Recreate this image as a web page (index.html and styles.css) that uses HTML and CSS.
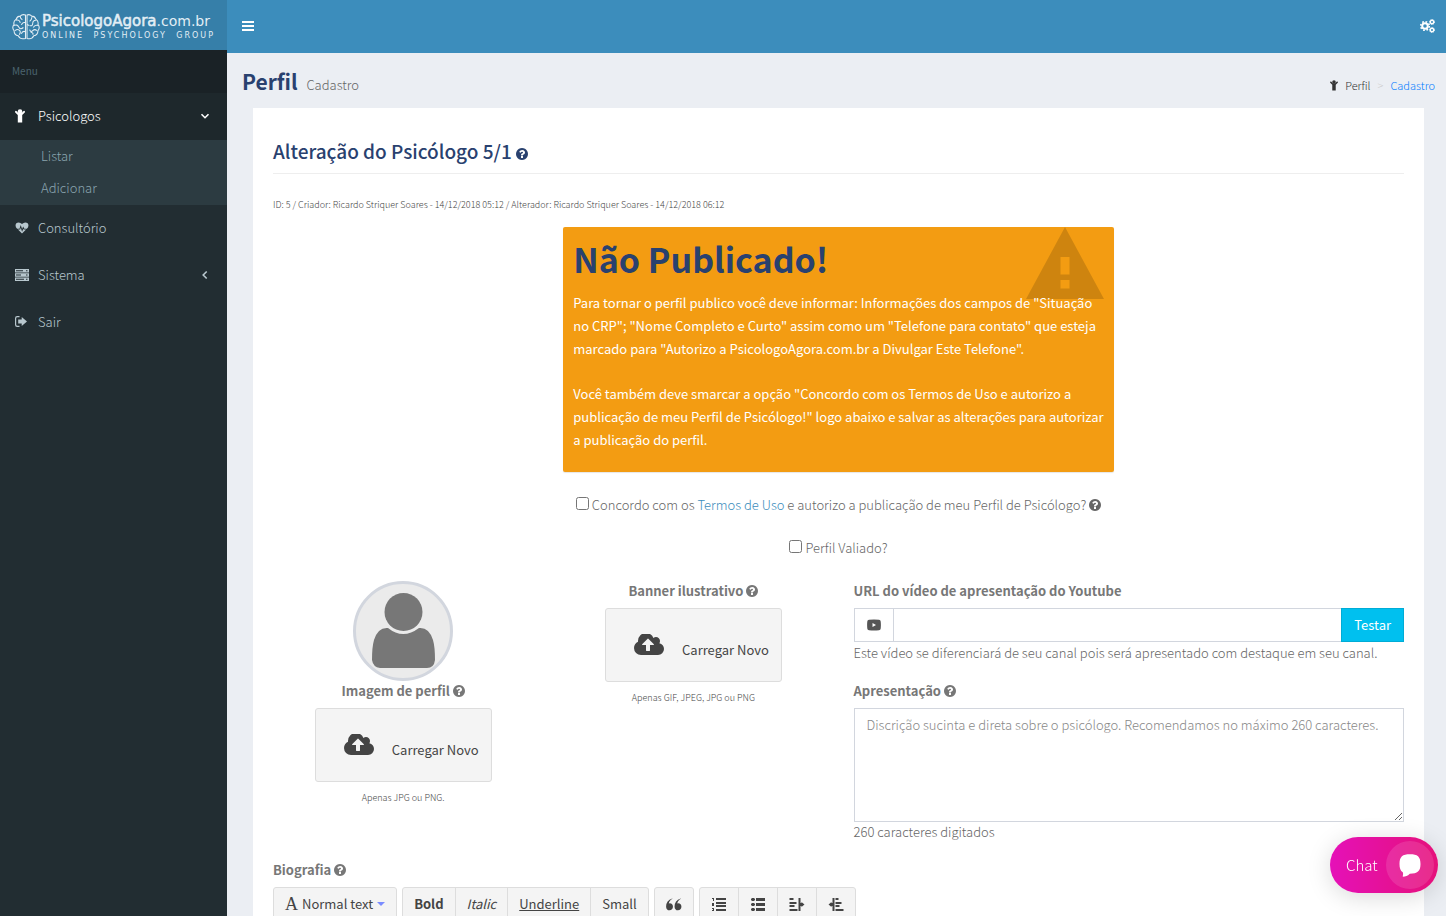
FILE: index.html
```html
<!DOCTYPE html>
<html lang="pt-br">
<head>
    <meta charset="utf-8">
    <meta name="viewport" content="width=device-width, initial-scale=1">
    <title>Perfil - Cadastro</title>
    <link rel="stylesheet" href="styles.css">
</head>
<body>
<svg class="sprite" aria-hidden="true">
    <symbol id="i-help" viewBox="128 128 1536 1536"><path d="M1024 1376v-192q0-14-9-23t-23-9h-192q-14 0-23 9t-9 23v192q0 14 9 23t23 9h192q14 0 23-9t9-23zm256-672q0-88-55.5-163t-138.5-116-170-41q-243 0-371 213-15 24 8 42l132 100q7 6 19 6 16 0 25-12 53-68 86-92 34-24 86-24 48 0 85.5 26t37.5 59q0 38-20 61t-68 45q-63 28-115.5 86.5t-52.5 125.5v36q0 14 9 23t23 9h192q14 0 23-9t9-23q0-19 21.5-49.5t54.5-49.5q32-18 49-28.5t46-35 44.5-48 28-60.5 12.5-81zm384 192q0 209-103 385.5t-279.5 279.5-385.5 103-385.5-103-279.5-279.5-103-385.5 103-385.5 279.5-279.5 385.5-103 385.5 103 279.5 279.5 103 385.5z"/></symbol>
    <symbol id="i-cloud" viewBox="0 256 1920 1280"><path d="M1280 864q0-14-9-23l-352-352q-9-9-23-9t-23 9l-351 351q-10 12-10 24 0 14 9 23t23 9h224v352q0 13 9.5 22.5t22.5 9.5h192q13 0 22.5-9.5t9.5-22.5v-352h224q13 0 22.5-9.5t9.5-22.5zm640 288q0 159-112.5 271.5t-271.5 112.5h-1088q-185 0-316.5-131.5t-131.5-316.5q0-130 70-240t188-165q-2-30-2-43 0-212 150-362t362-150q156 0 285.5 87t188.5 231q71-62 166-62 106 0 181 75t75 181q0 76-41 138 130 31 213.5 135.5t83.5 238.5z"/></symbol>
    <symbol id="i-child" viewBox="0 0 10 14"><circle cx="5" cy="2.5" r="2.3"/><path d="M.2 2.2Q.9 1.500 1.700 2.200L3.400 4h3.200l1.700-1.800Q9.100 1.500 9.800 2.200q.4.600 0 1.200L7.200 6V13.400H2.800V6L.2 3.400Q-.2 2.800.2 2.200z"/></symbol>
    <symbol id="i-heart" viewBox="0 0 14 13"><path d="M7 12.500 2.600 8.200H5L5.700 6.300 7.100 10.500 8.400 7.200 8.900 8.200H11.400zM1.700 7.200Q0 5.500 0 3.700 0 .500 3.500.500 5.200.500 7 2.300 8.800.500 10.500.500 14 .500 14 3.700 14 5.500 12.300 7.200H9.500L8.300 4.800 7.100 7.700 5.600 3.200 4.300 7.200z"/></symbol>
    <symbol id="i-server" viewBox="0 0 14 12"><path fill-rule="evenodd" d="M0 0h14v3.400H0zM1 1.200v1h7v-1zM11 1.200v1h1.500v-1zM0 4.300h14v3.400H0zM1 5.500v1h5v-1zM11 5.500v1h1.500v-1zM0 8.600h14V12H0zM1 9.800v1h8v-1zM11 9.800v1h1.500v-1z"/></symbol>
    <symbol id="i-exit" viewBox="0 0 12 11"><path d="M4.500 0v1.200H2.300Q1.200 1.200 1.200 2.400v6.200q0 1.200 1.100 1.200h2.200V11H2.200Q0 11 0 8.700V2.300Q0 0 2.200 0zM3.200 3.600h3.500V.900L12 5.500 6.700 10.100V7.400H3.200z"/></symbol>
    <symbol id="i-down" viewBox="0 0 10 10"><path class="line" d="M1.500 3.200 5 6.700 8.500 3.200"/></symbol>
    <symbol id="i-left" viewBox="0 0 10 10"><path class="line" d="M6.700 1.500 3.200 5 6.700 8.500"/></symbol>
    <symbol id="i-bars" viewBox="0 0 12 10"><path d="M0 0h12v2H0zM0 4h12v2H0zM0 8h12v2H0z"/></symbol>
    <symbol id="i-gears" viewBox="0 0 15 14"><g fill="none" stroke="currentColor"><circle cx="5" cy="7" r="2.800" stroke-width="2"/><circle cx="5" cy="7" r="4.300" stroke-width="1.600" stroke-dasharray="1.700 1.680"/><circle cx="12" cy="3" r="1.700" stroke-width="1.300"/><circle cx="12" cy="3" r="2.500" stroke-dasharray="1.200 .760"/><circle cx="12" cy="11" r="1.700" stroke-width="1.300"/><circle cx="12" cy="11" r="2.500" stroke-dasharray="1.200 .760"/></g></symbol>
    <symbol id="i-warning" viewBox="0 0 78 72"><path fill-rule="evenodd" d="M39 0 78 72H0zM34.500 30v17.500h9V30zM34.500 53v8.500h9V53z"/></symbol>
    <symbol id="i-video" viewBox="0 0 14 12"><path fill-rule="evenodd" d="M2 .800Q7 0 12 .800q1.600.200 1.700 1.700.4 3.500 0 7-.1 1.500-1.700 1.700-5 .800-10 0Q.400 11 .300 9.500q-.4-3.500 0-7Q.400 1 2 .800zM5.500 4v4L9 6z"/></symbol>
    <symbol id="i-quote" viewBox="0 0 17 13"><path d="M6.800.300Q3.200 2.300 3 5.500q.4-.2 1-.2Q7.300 5.500 7.400 9 7.100 12.600 3.700 12.700.200 12.500.100 8.500.100 2.300 6.600 0z"/><path d="M15.800.300Q12.200 2.300 12 5.500q.4-.2 1-.2 3.300.2 3.400 3.700-.3 3.600-3.700 3.700Q9.200 12.500 9.100 8.500 9.100 2.300 15.600 0z"/></symbol>
    <symbol id="i-ol" viewBox="0 0 14 13"><path d="M4 0h10v2H4zM4 4h10v2H4zM4 7h10v2H4zM4 11h10v2H4zM0 0h2v3H1V1H0zM0 5h2v3H0zM0 10h2v3H0V12h1v-1H0z"/></symbol>
    <symbol id="i-ul" viewBox="0 0 14 13"><path d="M5 0h9v3H5zM5 5h9v3H5zM5 10h9v3H5zM1 0h2l1 1v1L3 3H1L0 2V1zM1 5h2l1 1v1L3 8H1L0 7V6zM1 10h2l1 1v1l-1 1H1l-1-1v-1z"/></symbol>
    <symbol id="i-outdent" viewBox="0 0 15 13"><path d="M9 0h2v5h1V4l3 2.500L12 9V8h-1v5H9zM0 0h4v2H0zM0 4h7v2H0zM0 7h5v2H0zM0 11h8v2H0z"/></symbol>
    <symbol id="i-indent" viewBox="0 0 15 13"><path d="M4 0h2v13H4V8H3v1L0 6.500 3 4v1h1zM7 0h3v2H7zM7 4h6v2H7zM7 7h4v2H7zM7 11h8v2H7z"/></symbol>
    <symbol id="i-chat" viewBox="0 0 24 24"><path d="M12 1.200C19.500 1.200 22.500 3.500 22.500 11S19.500 20.600 11.800 20.700C9.500 23 7.500 23.400 4.900 23.800 4.300 22.900 5.800 21.800 4.800 19.300 2.300 17.700 1.500 15 1.500 11 1.500 3.500 4.500 1.200 12 1.200z"/></symbol>
    <symbol id="i-brain" viewBox="0 0 27 25"><path class="thin" d="M13 1Q10-.2 8 2 5 2 4 5 1 7 2 10-.5 13 2 16q0 4 4 5 2 4 7 2.500zM14.500 1Q17-.2 19 2q3 0 4 3 3 2 2 5 2.500 3 0 6 0 4-4 5-2 4-6.500 2.500zM8 2q-.5 2 2 3.500M4 6q3-1 4 2.500M2 11q3-1.500 4.500 1.500T11 13M3 16q2-2 4-.5T7 20M13 8q-3 0-4 2.500M13 17q-3-1-4 2M19 3q.5 2-2 4M23 6q-3 0-3 3t-3 2M25 11q-3-1-4.500 2M24 16q-2-2-4 0t-3-1M20 20q1-2-2-2.500M14.500 10l2 1"/></symbol>
</svg>

<aside class="sidebar">
    <a href="#" class="logo">
        <svg class="logo-mark"><use href="#i-brain"/></svg>
        <span class="logo-text">
            <span class="logo-name"><b>PsicologoAgora</b>.com.br</span>
            <span class="logo-tag"><span>ONLINE</span><span>PSYCHOLOGY</span><span>GROUP</span></span>
        </span>
    </a>
    <nav class="menu">
        <div class="menu-header">Menu</div>
        <a href="#" class="menu-item active">
            <svg class="icon-child"><use href="#i-child"/></svg><span>Psicologos</span><svg class="arrow"><use href="#i-down"/></svg>
        </a>
        <div class="submenu">
            <a href="#">Listar</a>
            <a href="#">Adicionar</a>
        </div>
        <a href="#" class="menu-item"><svg class="icon-menu"><use href="#i-heart"/></svg><span>Consultório</span></a>
        <a href="#" class="menu-item"><svg class="icon-menu"><use href="#i-server"/></svg><span>Sistema</span><svg class="arrow"><use href="#i-left"/></svg></a>
        <a href="#" class="menu-item"><svg class="icon-exit"><use href="#i-exit"/></svg><span>Sair</span></a>
    </nav>
</aside>

<div class="wrapper">
    <header class="navbar">
        <button type="button" class="nav-btn" aria-label="Menu"><svg class="icon-bars"><use href="#i-bars"/></svg></button>
        <button type="button" class="nav-btn" aria-label="Opções"><svg class="icon-gears"><use href="#i-gears"/></svg></button>
    </header>

    <div class="content-header">
        <h1>Perfil <small>Cadastro</small></h1>
        <nav class="breadcrumb">
            <svg class="icon-child-sm"><use href="#i-child"/></svg>
            <a href="#">Perfil</a>
            <i>&gt;</i>
            <a href="#" class="current">Cadastro</a>
        </nav>
    </div>

    <main class="box">
        <h2>Alteração do Psicólogo 5/1 <svg class="help"><use href="#i-help"/></svg></h2>
        <p class="meta">ID: 5 / Criador: Ricardo Striquer Soares - 14/12/2018 05:12 / Alterador: Ricardo Striquer Soares - 14/12/2018 06:12</p>

        <div class="notice">
            <svg class="notice-icon"><use href="#i-warning"/></svg>
            <h3>Não Publicado!</h3>
            <p>Para tornar o perfil publico você deve informar: Informações dos campos de "Situação no CRP"; "Nome Completo e Curto" assim como um "Telefone para contato" que esteja marcado para "Autorizo a PsicologoAgora.com.br a Divulgar Este Telefone".</p>
            <p>Você também deve smarcar a opção "Concordo com os Termos de Uso e autorizo a publicação de meu Perfil de Psicólogo!" logo abaixo e salvar as alterações para autorizar a publicação do perfil.</p>
        </div>

        <div class="check">
            <input type="checkbox" id="terms">
            <label for="terms">Concordo com os <a href="#">Termos de Uso</a> e autorizo a publicação de meu Perfil de Psicólogo? <svg class="help"><use href="#i-help"/></svg></label>
        </div>
        <div class="check">
            <input type="checkbox" id="valid">
            <label for="valid">Perfil Valiado?</label>
        </div>

        <div class="row">
            <div class="col center">
                <svg class="avatar" viewBox="0 0 100 100">
                    <circle cx="50" cy="50" r="48.500" fill="#ebebeb" stroke="#d2d6de" stroke-width="3"/>
                    <circle cx="50.500" cy="31" r="19" fill="#777"/>
                    <path fill="#777" d="M35 47Q50 59 66 47 76 46 80 59 82 66 82 79 81 87 74 87H27Q20 86 19 79 19 66 21 59 25 46 35 47z"/>
                </svg>
                <span class="label">Imagem de perfil <svg class="help"><use href="#i-help"/></svg></span>
                <button type="button" class="upload"><svg><use href="#i-cloud"/></svg><span>Carregar Novo</span></button>
                <small class="note">Apenas JPG ou PNG.</small>
            </div>
            <div class="col center">
                <span class="label">Banner ilustrativo <svg class="help"><use href="#i-help"/></svg></span>
                <button type="button" class="upload"><svg><use href="#i-cloud"/></svg><span>Carregar Novo</span></button>
                <small class="note">Apenas GIF, JPEG, JPG ou PNG</small>
            </div>
            <div class="col wide">
                <label class="label" for="video">URL do vídeo de apresentação do Youtube</label>
                <div class="input-group">
                    <span class="addon"><svg><use href="#i-video"/></svg></span>
                    <input type="text" id="video">
                    <button type="button">Testar</button>
                </div>
                <p class="hint">Este vídeo se diferenciará de seu canal pois será apresentado com destaque em seu canal.</p>

                <label class="label" for="about">Apresentação <svg class="help"><use href="#i-help"/></svg></label>
                <textarea id="about" placeholder="Discrição sucinta e direta sobre o psicólogo. Recomendamos no máximo 260 caracteres."></textarea>
                <p class="hint">260 caracteres digitados</p>
            </div>
        </div>

        <label class="label" for="bio">Biografia <svg class="help"><use href="#i-help"/></svg></label>
        <div class="toolbar">
            <div class="group"><button type="button"><span class="serif">A</span> Normal text <i class="caret"></i></button></div>
            <div class="group">
                <button type="button"><b>Bold</b></button>
                <button type="button"><em>Italic</em></button>
                <button type="button"><u>Underline</u></button>
                <button type="button">Small</button>
            </div>
            <div class="group"><button type="button" aria-label="Quote"><svg class="icon-edit"><use href="#i-quote"/></svg></button></div>
            <div class="group">
                <button type="button" aria-label="Ordered list"><svg class="icon-edit"><use href="#i-ol"/></svg></button>
                <button type="button" aria-label="Unordered list"><svg class="icon-edit"><use href="#i-ul"/></svg></button>
                <button type="button" aria-label="Outdent"><svg class="icon-edit"><use href="#i-outdent"/></svg></button>
                <button type="button" aria-label="Indent"><svg class="icon-edit"><use href="#i-indent"/></svg></button>
            </div>
        </div>
        <textarea id="bio" class="editor"></textarea>
    </main>
</div>

<button type="button" class="chat"><span>Chat</span><i><svg><use href="#i-chat"/></svg></i></button>
</body>
</html>
```
FILE: styles.css
```css
* {
    margin: 0;
    padding: 0;
    box-sizing: border-box;
}
html, body {
    height: 100%;
}
body {
    display: flex;
    overflow: hidden;
    font-family: "Noto Sans CJK SC", "Noto Sans", sans-serif;
    font-size: 13px;
    font-weight: 300;
    line-height: 20px;
    color: #666;
    background-color: #ebeef3;
}
button, input, textarea {
    font: inherit;
    color: inherit;
}
a {
    color: #3c8dbc;
    text-decoration: none;
}
svg {
    display: inline-block;
    fill: currentColor;
}
.sprite {
    position: absolute;
    width: 0;
    height: 0;
}
.line {
    fill: none;
    stroke: currentColor;
    stroke-width: 1.6;
}
.thin {
    fill: none;
    stroke: currentColor;
    stroke-width: 1;
}
.help {
    width: 12px;
    height: 12px;
    vertical-align: -1px;
}

/* sidebar */
.sidebar {
    flex: 0 0 227px;
    background-color: #222d32;
}
.logo {
    display: flex;
    align-items: center;
    gap: 2px;
    height: 50px;
    padding: 4px 12px 0 12px;
    color: #e3eef5;
    background-color: #367fa9;
}
.logo-mark {
    width: 28px;
    height: 26px;
}
.logo-text {
    flex: 1;
}
.logo-name {
    display: block;
    font: 14px/18px "DejaVu Sans", sans-serif;
    white-space: nowrap;
}
.logo-name b {
    font-size: 15px;
    font-weight: normal;
    -webkit-text-stroke: 0.5px;
}
.logo-tag {
    display: flex;
    justify-content: space-between;
    font: 8px/12px "DejaVu Sans", sans-serif;
    letter-spacing: 2px;
}
.menu-header {
    height: 43px;
    padding: 0 12px;
    font-size: 10px;
    font-weight: 400;
    line-height: 42px;
    color: #4b646f;
    background-color: #1a2226;
}
.menu-item {
    display: flex;
    align-items: center;
    height: 47px;
    padding: 0 17px 2px 15px;
    color: #b8c7ce;
}
.menu-item span {
    flex: 1;
}
.menu-item.active {
    color: #fff;
    background-color: #1e282c;
}
.icon-menu {
    width: 14px;
    height: 12px;
    margin-right: 9px;
}
.icon-child {
    width: 10px;
    height: 14px;
    margin-right: 13px;
}
.icon-exit {
    width: 12px;
    height: 11px;
    margin-right: 11px;
}
.arrow {
    width: 10px;
    height: 10px;
}
.submenu {
    height: 65px;
    background-color: #2c3b41;
}
.submenu a {
    display: block;
    padding-left: 41px;
    line-height: 32px;
    color: #8aa4af;
}

/* top */
.wrapper {
    flex: 1;
    min-width: 0;
}
.navbar {
    display: flex;
    align-items: center;
    justify-content: space-between;
    height: 53px;
    padding: 0 11px 1px 15px;
    background-color: #3c8dbc;
}
.nav-btn {
    display: flex;
    color: #fff;
    border: 0;
    background: none;
}
.icon-bars {
    width: 12px;
    height: 10px;
}
.icon-gears {
    width: 15px;
    height: 14px;
}
.content-header {
    display: flex;
    align-items: center;
    justify-content: space-between;
    height: 55px;
    padding: 4px 11px 0 15px;
}
.content-header h1 {
    font-size: 21px;
    font-weight: 600;
    color: #29416f;
}
.content-header small {
    margin-left: 4px;
    font-size: 13px;
    font-weight: 300;
    color: #666;
}
.breadcrumb {
    display: flex;
    align-items: center;
    gap: 7px;
    padding-top: 5px;
    font-size: 11px;
}
.breadcrumb a {
    color: #333;
}
.breadcrumb i {
    font-style: normal;
    color: #ccc;
}
.breadcrumb a.current {
    color: #007bff;
}
.icon-child-sm {
    width: 8px;
    height: 11px;
    fill: #333;
}

/* box */
.box {
    min-height: 900px;
    margin: 0 22px 0 26px;
    padding: 27px 20px;
    background-color: #fff;
}
.box h2 {
    padding-bottom: 6px;
    margin-bottom: 21px;
    font-size: 19px;
    font-weight: 500;
    line-height: 32px;
    color: #29416f;
    border-bottom: 1px solid #eee;
}
.meta {
    margin-bottom: 12px;
    font-size: 9px;
    color: #444;
}
.notice {
    position: relative;
    width: calc(50% - 15px);
    padding: 9px 10px 11px;
    margin: 0 auto 23px;
    font-weight: 400;
    color: #fff;
    background-color: #f39c12;
    border-radius: 2px;
    box-shadow: 0 1px 1px rgba(0, 0, 0, 0.1);
}
.notice h3 {
    margin-bottom: 10px;
    font-size: 34px;
    font-weight: 700;
    line-height: 45px;
    color: #29416f;
}
.notice p {
    position: relative;
    margin-bottom: 22px;
    line-height: 23px;
}
.notice p:last-child {
    margin-bottom: 10px;
}
.notice-icon {
    position: absolute;
    top: 0;
    right: 10px;
    width: 78px;
    height: 72px;
    color: rgba(0, 0, 0, 0.15);
}
.check {
    display: flex;
    justify-content: center;
    gap: 3px;
    margin-bottom: 23px;
}
.check input {
    width: 13px;
    height: 13px;
    margin-top: 2px;
}
.row {
    display: flex;
    margin: 0 -15px 18px;
}
.col {
    width: 25%;
    padding: 0 15px;
}
.col.wide {
    width: 50%;
}
.center {
    display: flex;
    flex-direction: column;
    align-items: center;
}
.avatar {
    width: 100px;
    height: 100px;
}
.label {
    display: block;
    margin-bottom: 7px;
    font-weight: 700;
    color: #777;
}
.upload {
    display: flex;
    align-items: center;
    width: 177px;
    height: 74px;
    padding: 0 12px 0 28px;
    font-weight: 400;
    color: #444;
    border: 1px solid #ddd;
    border-radius: 3px;
    background-color: #f4f4f4;
}
.upload svg {
    width: 30px;
    height: 22px;
}
.upload span {
    padding-top: 10px;
    margin-left: auto;
}
.note {
    margin-top: 6px;
    font-size: 9px;
    color: #444;
}
.input-group {
    display: flex;
    height: 34px;
}
.addon {
    display: flex;
    align-items: center;
    padding: 0 12px;
    border: 1px solid #d2d6de;
    border-right: 0;
}
.addon svg {
    width: 14px;
    height: 12px;
    fill: #555;
}
.input-group input {
    flex: 1;
    min-width: 0;
    padding: 6px 12px;
    border: 1px solid #d2d6de;
    border-right: 0;
}
.input-group button {
    padding: 0 12px;
    font-weight: 400;
    color: #fff;
    border: 1px solid #00acd6;
    background-color: #00c0ef;
}
.hint {
    margin: 1px 0 18px;
}
.hint:last-child {
    margin: 0;
}
textarea {
    display: block;
    width: 100%;
    height: 114px;
    padding: 6px 12px;
    border: 1px solid #d2d6de;
}
textarea::placeholder {
    color: #888;
}

/* editor */
.toolbar {
    display: flex;
    gap: 5px;
    margin-bottom: 10px;
}
.group {
    display: flex;
}
.group button {
    display: flex;
    align-items: center;
    gap: 4px;
    height: 34px;
    padding: 0 11px;
    font-weight: 400;
    color: #444;
    border: 1px solid #ddd;
    background-color: #f4f4f4;
}
.group button + button {
    margin-left: -1px;
}
.group button:first-child {
    border-radius: 3px 0 0 3px;
}
.group button:last-child {
    border-radius: 0 3px 3px 0;
}
.group button:only-child {
    border-radius: 3px;
}
.serif {
    font: 18px/20px "Liberation Serif", serif;
}
.caret {
    border: 4px solid transparent;
    border-top-color: #7a8cff;
    border-bottom: 0;
}
.icon-edit {
    width: 16px;
    height: 13px;
}
.editor {
    height: 200px;
}

.chat {
    position: fixed;
    right: 8px;
    bottom: 23px;
    display: flex;
    align-items: center;
    justify-content: space-between;
    width: 108px;
    height: 56px;
    padding: 0 4px 0 16px;
    font-size: 15px;
    color: #fff;
    border: 0;
    border-radius: 28px;
    background: linear-gradient(90deg, #e511b8, #e5117a);
    box-shadow: 0 4px 24px rgba(0, 0, 0, 0.15);
}
.chat i {
    display: flex;
    align-items: center;
    justify-content: center;
    width: 48px;
    height: 48px;
    border-radius: 50%;
    background-color: rgba(255, 255, 255, 0.12);
}
.chat svg {
    width: 28px;
    height: 24px;
}
```
